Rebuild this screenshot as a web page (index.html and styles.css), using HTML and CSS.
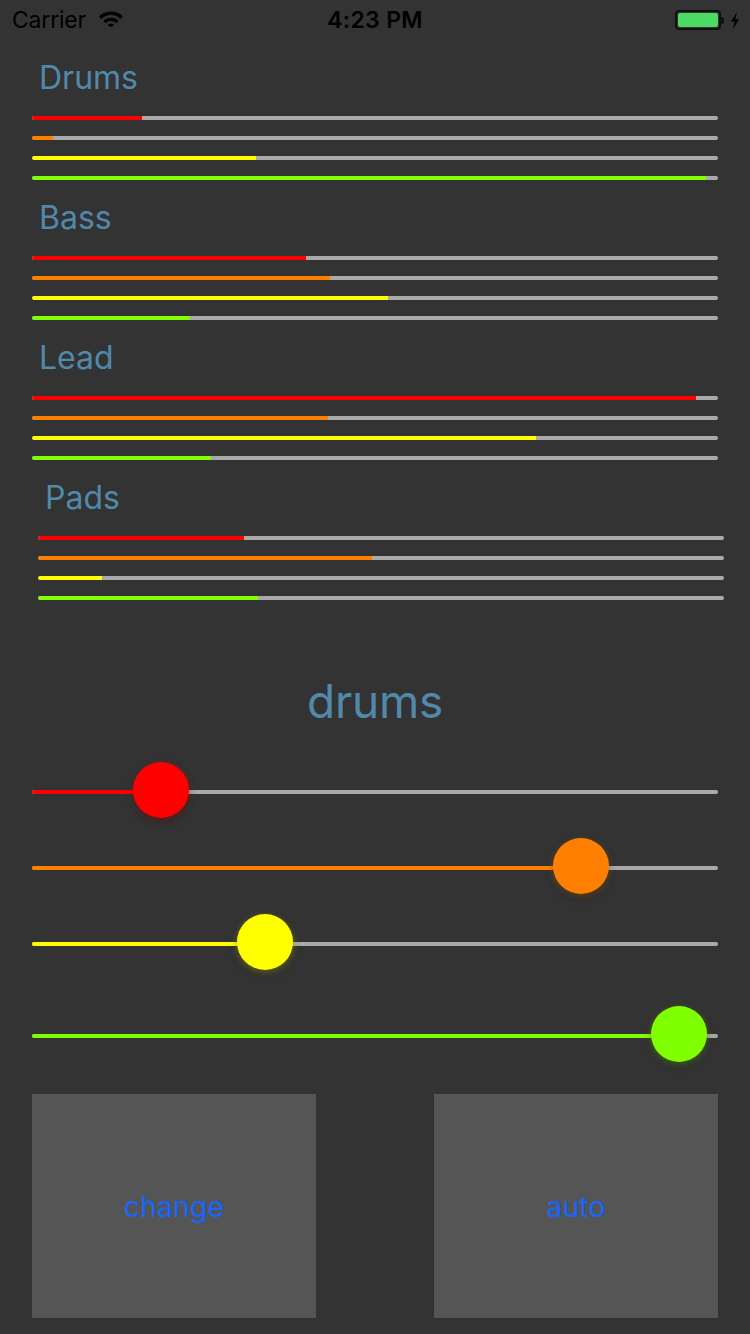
FILE: index.html
```html
<!DOCTYPE html>
<html>
<head>
<meta charset="utf-8">
<link rel="stylesheet" href="styles.css">
</head>
<body>
<div class="screen">
  <div class="statusbar">
    <div class="sb-left">
      <span class="carrier">Carrier</span>
      <svg class="wifi" width="26" height="16" viewBox="0 0 26 16">
        <path d="M1 5.5 A17 17 0 0 1 25 5.5 L22.6 7.9 A13.6 13.6 0 0 0 3.4 7.9 Z" fill="#000"/>
        <path d="M5.3 9.8 A11 11 0 0 1 20.7 9.8 L18.3 12.2 A7.6 7.6 0 0 0 7.7 12.2 Z" fill="#000"/>
        <path d="M9.6 14.1 A5 5 0 0 1 16.4 14.1 L13 16 Z" fill="#000"/>
      </svg>
    </div>
    <div class="sb-time">4:23 PM</div>
    <div class="sb-right">
      <div class="battery"><div class="battery-fill"></div></div>
      <div class="battery-nub"></div>
      <svg class="bolt" width="10" height="17" viewBox="0 0 10 17">
        <path d="M7 0 L1 9.5 H4.6 L3 17 L9 7.3 H5.4 Z" fill="#000"/>
      </svg>
    </div>
  </div>

  <div class="mixer">
    <section class="group">
      <h2 class="group-title">Drums</h2>
      <div class="bars">
        <div class="bar"><div class="fill red" style="width:16%"></div></div>
        <div class="bar"><div class="fill orange" style="width:3.1%"></div></div>
        <div class="bar"><div class="fill yellow" style="width:32.6%"></div></div>
        <div class="bar"><div class="fill green" style="width:98.3%"></div></div>
      </div>
    </section>
    <section class="group">
      <h2 class="group-title">Bass</h2>
      <div class="bars">
        <div class="bar"><div class="fill red" style="width:39.9%"></div></div>
        <div class="bar"><div class="fill orange" style="width:43.4%"></div></div>
        <div class="bar"><div class="fill yellow" style="width:51.9%"></div></div>
        <div class="bar"><div class="fill green" style="width:23%"></div></div>
      </div>
    </section>
    <section class="group">
      <h2 class="group-title">Lead</h2>
      <div class="bars">
        <div class="bar"><div class="fill red" style="width:96.8%"></div></div>
        <div class="bar"><div class="fill orange" style="width:43.1%"></div></div>
        <div class="bar"><div class="fill yellow" style="width:73.5%"></div></div>
        <div class="bar"><div class="fill green" style="width:26.1%"></div></div>
      </div>
    </section>
    <section class="group group-shift">
      <h2 class="group-title">Pads</h2>
      <div class="bars">
        <div class="bar"><div class="fill red" style="width:30%"></div></div>
        <div class="bar"><div class="fill orange" style="width:48.7%"></div></div>
        <div class="bar"><div class="fill yellow" style="width:9.3%"></div></div>
        <div class="bar"><div class="fill green" style="width:32.1%"></div></div>
      </div>
    </section>
  </div>

  <h1 class="current">drums</h1>

  <div class="sliders">
    <div class="slider">
      <div class="track"><div class="track-fill red" style="width:129px"></div></div>
      <div class="thumb red glow-red" style="left:101px"></div>
    </div>
    <div class="slider">
      <div class="track"><div class="track-fill orange" style="width:549px"></div></div>
      <div class="thumb orange glow-orange" style="left:521px"></div>
    </div>
    <div class="slider">
      <div class="track"><div class="track-fill yellow" style="width:233px"></div></div>
      <div class="thumb yellow glow-yellow" style="left:205px"></div>
    </div>
    <div class="slider slider-last">
      <div class="track"><div class="track-fill green" style="width:647px"></div></div>
      <div class="thumb green glow-green" style="left:619px"></div>
    </div>
  </div>

  <div class="buttons">
    <button class="btn">change</button>
    <button class="btn">auto</button>
  </div>
</div>
</body>
</html>
```

FILE: styles.css
```css
* { box-sizing: border-box; }
html, body {
  margin: 0;
  padding: 0;
  background: #333333;
}
body {
  width: 750px;
  height: 1334px;
  overflow: hidden;
  font-family: Inter, "Liberation Sans", sans-serif;
}
.screen {
  width: 750px;
  height: 1334px;
  display: flex;
  flex-direction: column;
}

/* status bar */
.statusbar {
  height: 40px;
  display: flex;
  align-items: center;
  justify-content: space-between;
  padding: 0 12px 0 12px;
  position: relative;
  color: #000;
  font-size: 23px;
}
.sb-left {
  display: flex;
  align-items: center;
  gap: 12px;
}
.carrier { letter-spacing: -0.2px; }
.wifi { margin-top: -2px; }
.sb-time {
  position: absolute;
  left: 0;
  right: 0;
  text-align: center;
  font-weight: 600;
  letter-spacing: 0.3px;
  pointer-events: none;
}
.sb-right {
  display: flex;
  align-items: center;
}
.battery {
  width: 46px;
  height: 20px;
  border: 2px solid #111;
  border-radius: 4px;
  padding: 1px;
}
.battery-fill {
  width: 100%;
  height: 100%;
  background: #4cd964;
  border-radius: 2px;
}
.battery-nub {
  width: 3px;
  height: 7px;
  background: #111;
  border-radius: 0 2px 2px 0;
  margin-right: 6px;
}
.bolt { margin-right: -2px; }

/* groups */
.mixer {
  display: flex;
  flex-direction: column;
  gap: 10px;
  padding: 10px 32px 0 32px;
}
.group {
  display: flex;
  flex-direction: column;
}
.group-shift {
  margin-left: 6px;
  margin-right: -6px;
}
.group-title {
  margin: 0 0 10px 7px;
  height: 56px;
  line-height: 56px;
  font-size: 32px;
  font-weight: 400;
  color: #5189ab;
}
.bars {
  display: flex;
  flex-direction: column;
  gap: 16px;
}
.bar {
  height: 4px;
  background: #a9a9a9;
  border-radius: 2px;
  overflow: hidden;
}
.fill {
  height: 100%;
  border-radius: 2px 0 0 2px;
}
.red { background: #ff0000; }
.orange { background: #ff8000; }
.yellow { background: #ffff00; }
.green { background: #80ff00; }

.current {
  margin: 68px 0 2px 0;
  height: 66px;
  line-height: 66px;
  text-align: center;
  font-size: 46px;
  font-weight: 400;
  letter-spacing: -0.3px;
  color: #5189ab;
}

/* sliders */
.sliders {
  margin-top: 28px;
  padding: 0 32px;
  display: flex;
  flex-direction: column;
  gap: 20px;
}
.slider {
  position: relative;
  height: 56px;
  display: flex;
  align-items: center;
}
.slider-last { margin-top: 16px; }
.track {
  width: 100%;
  height: 4px;
  background: #a9a9a9;
  border-radius: 2px;
  overflow: hidden;
}
.track-fill {
  height: 100%;
}
.thumb {
  position: absolute;
  top: -2px;
  width: 56px;
  height: 56px;
  border-radius: 50%;
}
.glow-red { box-shadow: 0 4px 9px rgba(0,0,0,0.25), 0 2px 6px rgba(255,0,0,0.35); }
.glow-orange { box-shadow: 0 4px 9px rgba(0,0,0,0.25), 0 2px 6px rgba(255,128,0,0.35); }
.glow-yellow { box-shadow: 0 4px 9px rgba(0,0,0,0.25), 0 2px 6px rgba(255,255,0,0.35); }
.glow-green { box-shadow: 0 4px 9px rgba(0,0,0,0.25), 0 2px 6px rgba(128,255,0,0.35); }

/* buttons */
.buttons {
  margin-top: 30px;
  padding: 0 32px;
  display: flex;
  justify-content: space-between;
}
.btn {
  width: 284px;
  height: 224px;
  background: #555555;
  border: none;
  border-radius: 0;
  padding: 1px 0 0 0;
  color: #1565ff;
  font-family: Inter, "Liberation Sans", sans-serif;
  font-size: 28.5px;
  font-weight: 400;
}
```
